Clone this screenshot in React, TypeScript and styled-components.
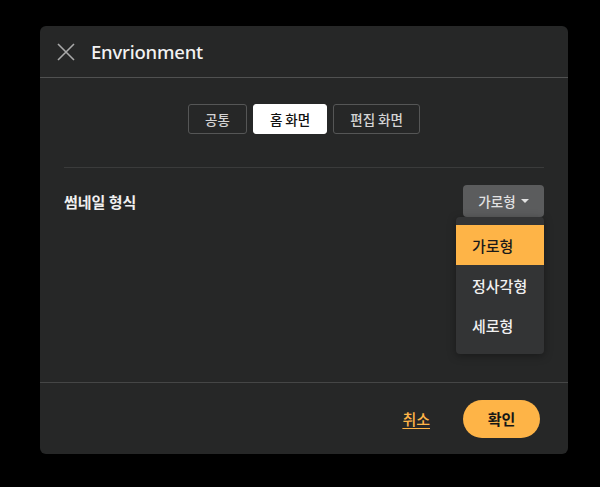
import React, { FC, useState } from "react";
import styled, { createGlobalStyle } from "styled-components";

const GlobalStyle = createGlobalStyle`
  html, body {
    margin: 0;
    padding: 0;
    background: #000;
  }
  body {
    font-family: "Noto Sans", "Noto Sans CJK KR", sans-serif;
  }
`;

const Backdrop = styled.div`
  width: 600px;
  height: 487px;
  padding: 26px 32px 33px 40px;
  box-sizing: border-box;
  background: #000;
`;

const Modal = styled.section`
  width: 528px;
  height: 428px;
  background: #262727;
  border-radius: 6px;
  display: flex;
  flex-direction: column;
`;

const Header = styled.header`
  height: 52px;
  display: flex;
  align-items: center;
  gap: 15px;
  padding: 0 16px;
  border-bottom: 1px solid #505151;
  box-sizing: border-box;
`;

const CloseButton = styled.button`
  width: 20px;
  height: 20px;
  padding: 0;
  border: 0;
  background: none;
  display: flex;
  align-items: center;
  justify-content: center;
  cursor: pointer;
`;

const Title = styled.h1`
  margin: 0;
  font-size: 18.5px;
  font-weight: 500;
  color: #f2f2f2;
  letter-spacing: -0.2px;
`;

const Body = styled.div`
  flex: 1;
  padding: 26px 24px 0;
`;

const Tabs = styled.div`
  display: flex;
  justify-content: center;
  gap: 6px;
  padding-bottom: 33px;
  border-bottom: 1px solid #3a3b3b;
`;

const Tab = styled.button<{ $active?: boolean }>`
  height: 30px;
  padding: 0 16px;
  border-radius: 3px;
  border: 1px solid ${({ $active }) => ($active ? "#fff" : "#555656")};
  background: ${({ $active }) => ($active ? "#fff" : "transparent")};
  color: ${({ $active }) => ($active ? "#111" : "#d4d4d4")};
  font-family: "Noto Sans CJK KR", sans-serif;
  font-size: 13.5px;
  font-weight: 500;
  cursor: pointer;
`;

const Row = styled.div`
  display: flex;
  align-items: center;
  justify-content: space-between;
  margin-top: 17px;
`;

const Label = styled.span`
  font-family: "Noto Sans CJK KR", sans-serif;
  font-size: 15px;
  font-weight: 700;
  color: #f0f0f0;
`;

const SelectWrap = styled.div`
  position: relative;
`;

const SelectButton = styled.button`
  width: 81px;
  height: 32px;
  border: 0;
  border-radius: 4px;
  background: #5b5c5d;
  color: #e2e2e2;
  font-family: "Noto Sans CJK KR", sans-serif;
  font-size: 13.5px;
  font-weight: 500;
  display: flex;
  align-items: center;
  justify-content: center;
  gap: 5px;
  cursor: pointer;
`;

const Caret = styled.span`
  width: 0;
  height: 0;
  border-left: 4px solid transparent;
  border-right: 4px solid transparent;
  border-top: 4px solid #e2e2e2;
`;

const Menu = styled.ul`
  position: absolute;
  top: 32px;
  right: 0;
  width: 88px;
  margin: 0;
  padding: 8px 0 9px;
  list-style: none;
  background: #333435;
  border-radius: 4px;
  box-shadow: 0 2px 8px rgba(0, 0, 0, 0.35);
`;

const MenuItem = styled.li<{ $selected?: boolean }>`
  height: 40px;
  display: flex;
  align-items: center;
  padding-left: 16px;
  font-family: "Noto Sans CJK KR", sans-serif;
  font-size: 15px;
  font-weight: 500;
  color: ${({ $selected }) => ($selected ? "#1a1a1a" : "#f0f0f0")};
  background: ${({ $selected }) => ($selected ? "#feb447" : "transparent")};
  cursor: pointer;
`;

const Footer = styled.footer`
  height: 72px;
  border-top: 1px solid #454646;
  display: flex;
  align-items: center;
  justify-content: flex-end;
  gap: 33px;
  padding: 0 28px 0 0;
  box-sizing: border-box;
`;

const CancelLink = styled.a`
  font-family: "Noto Sans CJK KR", sans-serif;
  font-size: 15px;
  font-weight: 500;
  color: #feb447;
  text-decoration: underline;
  text-underline-offset: 3px;
  cursor: pointer;
`;

const ConfirmButton = styled.button`
  width: 77px;
  height: 38px;
  border: 0;
  border-radius: 19px;
  background: #feb447;
  color: #161616;
  font-family: "Noto Sans CJK KR", sans-serif;
  font-size: 15px;
  font-weight: 700;
  cursor: pointer;
`;

const tabs = ["공통", "홈 화면", "편집 화면"];
const options = ["가로형", "정사각형", "세로형"];

const App: FC = () => {
  const [tab, setTab] = useState("홈 화면");
  const [value, setValue] = useState("가로형");

  return (
    <>
      <GlobalStyle />
      <Backdrop>
        <Modal>
          <Header>
            <CloseButton aria-label="close">
              <svg width="18" height="18" viewBox="0 0 18 18">
                <path d="M1 1L17 17M17 1L1 17" stroke="#a9a9a9" strokeWidth="1.6" />
              </svg>
            </CloseButton>
            <Title>Envrionment</Title>
          </Header>
          <Body>
            <Tabs>
              {tabs.map((t) => (
                <Tab key={t} $active={t === tab} onClick={() => setTab(t)}>
                  {t}
                </Tab>
              ))}
            </Tabs>
            <Row>
              <Label>썸네일 형식</Label>
              <SelectWrap>
                <SelectButton>
                  {value}
                  <Caret />
                </SelectButton>
                <Menu>
                  {options.map((o) => (
                    <MenuItem key={o} $selected={o === value} onClick={() => setValue(o)}>
                      {o}
                    </MenuItem>
                  ))}
                </Menu>
              </SelectWrap>
            </Row>
          </Body>
          <Footer>
            <CancelLink>취소</CancelLink>
            <ConfirmButton>확인</ConfirmButton>
          </Footer>
        </Modal>
      </Backdrop>
    </>
  );
};

export default App;
